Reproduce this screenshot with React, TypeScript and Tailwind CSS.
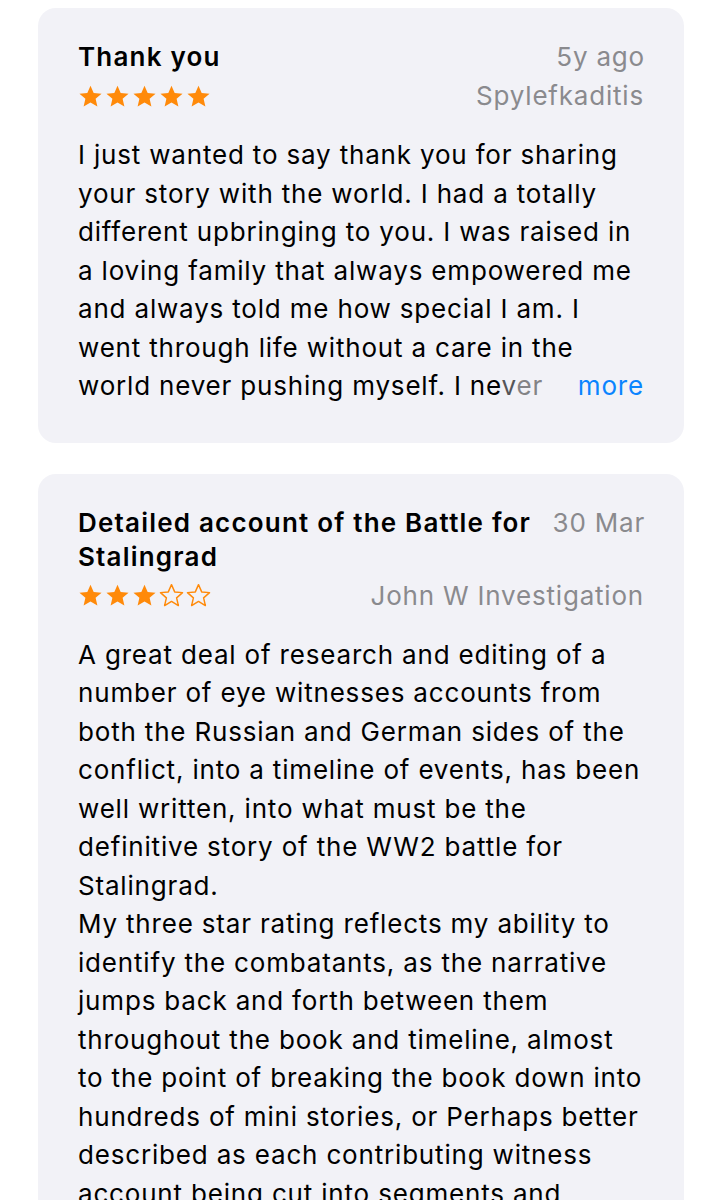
import React from "react";

const STAR = "M12 1.6l3.05 6.95 7.55.7-5.7 5 1.7 7.45L12 17.75l-6.6 3.95 1.7-7.45-5.7-5 7.55-.7z";

function Stars({ n }: { n: number }) {
  return (
    <div className="flex items-center gap-[2px]">
      {[0, 1, 2, 3, 4].map((i) => (
        <svg key={i} width="25" height="25" viewBox="0 0 24 24">
          {i < n ? (
            <path d={STAR} fill="#ff8a0a" />
          ) : (
            <path d={STAR} fill="none" stroke="#ff8a0a" strokeWidth="1.4" strokeLinejoin="round" />
          )}
        </svg>
      ))}
    </div>
  );
}

function Card({
  title,
  date,
  author,
  stars,
  lines,
  more,
}: {
  title: string[];
  date: string;
  author: string;
  stars: number;
  lines: string[];
  more?: boolean;
}) {
  return (
    <div className="rounded-[18px] bg-[#f2f2f7] px-10 pt-8 pb-[37px]">
      <div className="flex justify-between gap-3">
        <div className="text-[26px] leading-[34px] font-semibold text-black tracking-[1.2px]">
          {title.map((t, i) => (
            <div key={i} className="whitespace-nowrap">{t}</div>
          ))}
        </div>
        <div className="shrink-0 text-[26px] leading-[34px] text-[#8a8a8e] tracking-[0.8px] mr-[-1px]">{date}</div>
      </div>
      <div className="mt-[5px] flex items-center justify-between h-[34px]">
        <Stars n={stars} />
        <div className="text-[26px] leading-[34px] text-[#8a8a8e] tracking-[0.8px]">{author}</div>
      </div>
      <div className="mt-[23px] text-[26px] leading-[38.5px] text-black tracking-[0.82px]">
        {lines.map((l, i) =>
          more && i === lines.length - 1 ? (
            <div key={i} className="flex justify-between items-center">
              <span className="whitespace-nowrap">
                {l.slice(0, -3)}
                <span className="text-[#555558]">{l.slice(-3, -2)}</span>
                <span className="text-[#838386]">{l.slice(-2)}</span>
              </span>
              <span className="text-[#0a84ff]">more</span>
            </div>
          ) : (
            <div key={i} className="whitespace-nowrap">{l}</div>
          )
        )}
      </div>
    </div>
  );
}

export default function App() {
  return (
    <div
      className="bg-white h-[1200px] overflow-hidden px-[38px] pt-2 flex flex-col gap-[31px]"
      style={{ fontFamily: "Inter, 'Noto Sans', sans-serif" }}
    >
      <Card
        title={["Thank you"]}
        date="5y ago"
        author="Spylefkaditis"
        stars={5}
        more
        lines={[
          "I just wanted to say thank you for sharing",
          "your story with the world. I had a totally",
          "different upbringing to you. I was raised in",
          "a loving family that always empowered me",
          "and always told me how special I am. I",
          "went through life without a care in the",
          "world never pushing myself. I never",
        ]}
      />
      <Card
        title={["Detailed account of the Battle for", "Stalingrad"]}
        date="30 Mar"
        author="John W Investigation"
        stars={3}
        lines={[
          "A great deal of research and editing of a",
          "number of eye witnesses accounts from",
          "both the Russian and German sides of the",
          "conflict, into a timeline of events, has been",
          "well written, into what must be the",
          "definitive story of the WW2 battle for",
          "Stalingrad.",
          "My three star rating reflects my ability to",
          "identify the combatants, as the narrative",
          "jumps back and forth between them",
          "throughout the book and timeline, almost",
          "to the point of breaking the book down into",
          "hundreds of mini stories, or Perhaps better",
          "described as each contributing witness",
          "account being cut into segments and",
        ]}
      />
    </div>
  );
}
